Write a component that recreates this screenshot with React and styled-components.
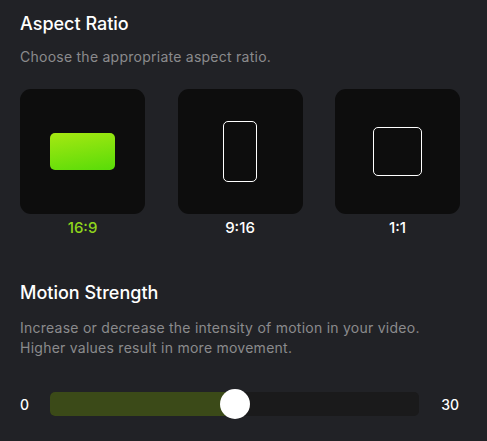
import React, { useState } from 'react';
import styled, { createGlobalStyle } from 'styled-components';

const Global = createGlobalStyle`
  html, body {
    margin: 0;
    padding: 0;
    background: #212226;
  }
  body {
    font-family: Inter, 'Noto Sans', sans-serif;
    -webkit-font-smoothing: antialiased;
  }
`;

const Panel = styled.div`
  width: 487px;
  height: 441px;
  box-sizing: border-box;
  padding: 12px 20px 0 20px;
  color: #fff;
`;

const Title = styled.h2`
  margin: 0;
  font-size: 18px;
  font-weight: 500;
  line-height: 24px;
  color: #fff;
`;

const Description = styled.p`
  margin: ${(p) => p.$mt || 11}px 0 0 0;
  font-size: 14px;
  line-height: 20px;
  letter-spacing: 0.25px;
  color: #8b8b8d;
`;

const Options = styled.div`
  display: flex;
  gap: 32.5px;
  margin-top: 22px;
`;

const Option = styled.button`
  display: flex;
  flex-direction: column;
  align-items: center;
  gap: 4px;
  padding: 0;
  border: none;
  background: none;
  cursor: pointer;
  font-family: inherit;
`;

const Card = styled.div`
  width: 125px;
  height: 125px;
  border-radius: 11px;
  background: #0d0d0d;
  display: flex;
  align-items: center;
  justify-content: center;
`;

const Shape = styled.div`
  width: ${(p) => p.$w}px;
  height: ${(p) => p.$h}px;
  box-sizing: border-box;
  border-radius: 5px;
  border: ${(p) => (p.$active ? 'none' : '1.5px solid #fff')};
  background: ${(p) =>
    p.$active ? 'linear-gradient(170deg, #a6e812 0%, #58dc08 100%)' : 'transparent'};
`;

const Label = styled.span`
  font-size: 15px;
  font-weight: 500;
  line-height: 20px;
  color: ${(p) => (p.$active ? '#8fd61c' : '#fff')};
`;

const Section = styled.div`
  margin-top: ${(p) => p.$mt || 0}px;
`;

const SliderRow = styled.div`
  display: flex;
  align-items: center;
  gap: 20px;
  margin-top: 34px;
  padding-right: 8px;
  font-size: 14px;
  font-weight: 500;
`;

const Bound = styled.span`
  width: ${(p) => p.$w}px;
  text-align: ${(p) => p.$align || 'left'};
  color: #fff;
`;

const Track = styled.div`
  position: relative;
  flex: 1;
  height: 24px;
  border-radius: 5px;
  background: #1a1a1b;
`;

const Fill = styled.div`
  height: 100%;
  border-radius: 5px 0 0 5px;
  background: #3b4a18;
`;

const Thumb = styled.div`
  position: absolute;
  top: 50%;
  width: 30px;
  height: 30px;
  border-radius: 50%;
  background: #fff;
  transform: translate(-50%, -50%);
`;

const ratios = [
  { id: '16:9', w: 65, h: 37 },
  { id: '9:16', w: 34, h: 61 },
  { id: '1:1', w: 49, h: 49 },
];

export default function App() {
  const [ratio, setRatio] = useState('16:9');
  const value = 15;
  const max = 30;
  const pct = (value / max) * 100;

  return (
    <>
      <Global />
      <Panel>
        <Title>Aspect Ratio</Title>
        <Description>Choose the appropriate aspect ratio.</Description>
        <Options>
          {ratios.map((r) => (
            <Option key={r.id} onClick={() => setRatio(r.id)}>
              <Card>
                <Shape $w={r.w} $h={r.h} $active={ratio === r.id} />
              </Card>
              <Label $active={ratio === r.id}>{r.id}</Label>
            </Option>
          ))}
        </Options>

        <Section $mt={43}>
          <Title>Motion Strength</Title>
          <Description $mt={13}>
            Increase or decrease the intensity of motion in your video.
            <br />
            Higher values result in more movement.
          </Description>
          <SliderRow>
            <Bound $w={10}>0</Bound>
            <Track>
              <Fill style={{ width: `${pct}%` }} />
              <Thumb style={{ left: `${pct}%` }} />
            </Track>
            <Bound $w={20} $align="right">
              30
            </Bound>
          </SliderRow>
        </Section>
      </Panel>
    </>
  );
}
